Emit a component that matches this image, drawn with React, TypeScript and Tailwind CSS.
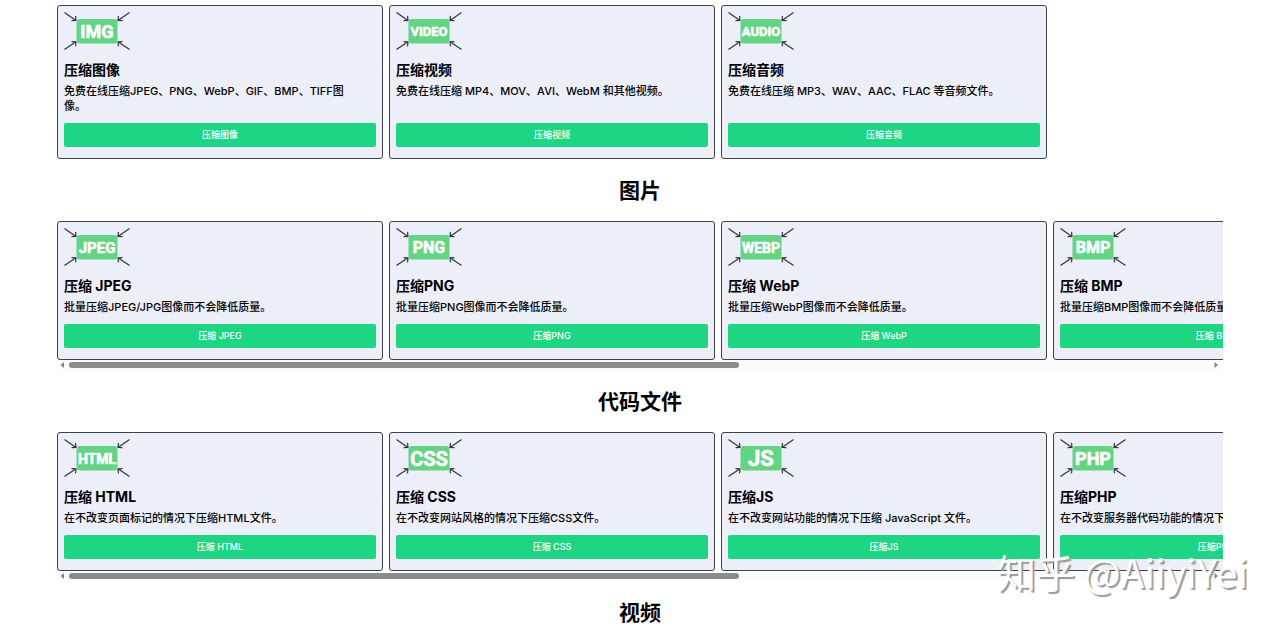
import { useRef } from "react";

interface Tool {
  badge: string;
  badgeSize: number;
  title: string;
  text: string;
}

const mainTools: Tool[] = [
  { badge: "IMG", badgeSize: 18, title: "压缩图像", text: "免费在线压缩JPEG、PNG、WebP、GIF、BMP、TIFF图像。" },
  { badge: "VIDEO", badgeSize: 13, title: "压缩视频", text: "免费在线压缩 MP4、MOV、AVI、WebM 和其他视频。" },
  { badge: "AUDIO", badgeSize: 13, title: "压缩音频", text: "免费在线压缩 MP3、WAV、AAC、FLAC 等音频文件。" },
];

const imageTools: Tool[] = [
  { badge: "JPEG", badgeSize: 15, title: "压缩 JPEG", text: "批量压缩JPEG/JPG图像而不会降低质量。" },
  { badge: "PNG", badgeSize: 16, title: "压缩PNG", text: "批量压缩PNG图像而不会降低质量。" },
  { badge: "WEBP", badgeSize: 14, title: "压缩 WebP", text: "批量压缩WebP图像而不会降低质量。" },
  { badge: "BMP", badgeSize: 16, title: "压缩 BMP", text: "批量压缩BMP图像而不会降低质量。" },
];

const codeTools: Tool[] = [
  { badge: "HTML", badgeSize: 14, title: "压缩 HTML", text: "在不改变页面标记的情况下压缩HTML文件。" },
  { badge: "CSS", badgeSize: 20, title: "压缩 CSS", text: "在不改变网站风格的情况下压缩CSS文件。" },
  { badge: "JS", badgeSize: 22, title: "压缩JS", text: "在不改变网站功能的情况下压缩 JavaScript 文件。" },
  { badge: "PHP", badgeSize: 18, title: "压缩PHP", text: "在不改变服务器代码功能的情况下压缩PHP文件。" },
];

function Badge({ label, size }: { label: string; size: number }) {
  return (
    <svg width="66" height="38" viewBox="0 0 66 38" className="block" aria-hidden="true">
      <rect x="12.5" y="7" width="41" height="24.5" rx="3.5" fill="#63d384" />
      <g fill="none" stroke="#33353d" strokeWidth="1.2" strokeLinecap="round" strokeLinejoin="round">
        <path d="M0.8 0.8 L12 8.4 M11.6 4.4 L12 8.4 L8 8.6" />
        <path d="M65.2 0.8 L54 8.4 M54.4 4.4 L54 8.4 L58 8.6" />
        <path d="M0.8 37.2 L12 29.8 M8 29.6 L12 29.8 L11.6 33.8" />
        <path d="M65.2 37.2 L54 29.8 M58 29.6 L54 29.8 L54.4 33.8" />
      </g>
      <text
        x="33"
        y={19.5 + size * 0.36}
        textAnchor="middle"
        fontSize={size}
        fontWeight="700"
        fill="#fff"
        stroke="#fff"
        strokeWidth="0.6"
        strokeLinejoin="round"
        fontFamily="Roboto, sans-serif"
      >
        {label}
      </text>
    </svg>
  );
}

function ToolCard({ tool }: { tool: Tool }) {
  return (
    <article className="flex w-[326px] shrink-0 flex-col rounded-[3px] border border-[#3f4048] bg-[#eceff7] px-[6px] pt-[6px] pb-[11px]">
      <Badge label={tool.badge} size={tool.badgeSize} />
      <h3 className="mt-[10px] text-[14px] leading-[20px] font-bold">{tool.title}</h3>
      <p className="mt-[4px] mb-[9px] pr-3 text-[11px] leading-[15px] font-medium">{tool.text}</p>
      <button
        type="button"
        className="mt-auto h-6 w-full cursor-pointer rounded-[2px] bg-[#1dd582] text-[9px] leading-[12px] font-medium text-white hover:bg-[#19c276]"
      >
        {tool.title}
      </button>
    </article>
  );
}

function Heading({ children }: { children: string }) {
  return <h2 className="mt-5 mb-[18px] text-center text-[21px] leading-[24px] font-bold">{children}</h2>;
}

function ScrollRow({ tools }: { tools: Tool[] }) {
  const rowRef = useRef<HTMLDivElement>(null);
  const scroll = (dx: number) => rowRef.current?.scrollBy({ left: dx, behavior: "smooth" });

  return (
    <div>
      <div ref={rowRef} className="flex gap-[6px] overflow-x-auto [scrollbar-width:none]">
        {tools.map((tool) => (
          <ToolCard key={tool.badge} tool={tool} />
        ))}
      </div>
      <div className="flex h-[10px] items-center bg-[#fcfcfc] px-[3px]">
        <button type="button" aria-label="向左滚动" onClick={() => scroll(-332)} className="w-[9px] shrink-0">
          <svg width="4" height="6" viewBox="0 0 4 6" className="block">
            <path d="M4 0 L0.5 3 L4 6 Z" fill="#858585" />
          </svg>
        </button>
        <div className="flex-1">
          <div className="h-[6px] w-[670px] max-w-full rounded-full bg-[#8b8b8b]" />
        </div>
        <button type="button" aria-label="向右滚动" onClick={() => scroll(332)} className="flex w-[9px] shrink-0 justify-end">
          <svg width="6" height="6" viewBox="0 0 6 6" className="block">
            <path d="M0.5 0 L4 3 L0.5 6 Z" fill="#858585" />
          </svg>
        </button>
      </div>
    </div>
  );
}

export default function App() {
  return (
    <main className="relative min-h-screen overflow-hidden bg-white px-[57px] pt-[5px] font-[Inter,'Noto_Sans_CJK_SC',sans-serif] text-black">
      <div className="flex gap-[6px]">
        {mainTools.map((tool) => (
          <ToolCard key={tool.badge} tool={tool} />
        ))}
      </div>

      <Heading>图片</Heading>
      <ScrollRow tools={imageTools} />

      <Heading>代码文件</Heading>
      <ScrollRow tools={codeTools} />

      <Heading>视频</Heading>

      {/* Watermark */}
      <div className="pointer-events-none absolute right-8 bottom-12 font-['Noto_Sans_CJK_SC',sans-serif] text-[39px] leading-[48px] text-white [text-shadow:2px_2px_1px_#999999]">
        知乎 @AiiyiYei
      </div>
    </main>
  );
}
